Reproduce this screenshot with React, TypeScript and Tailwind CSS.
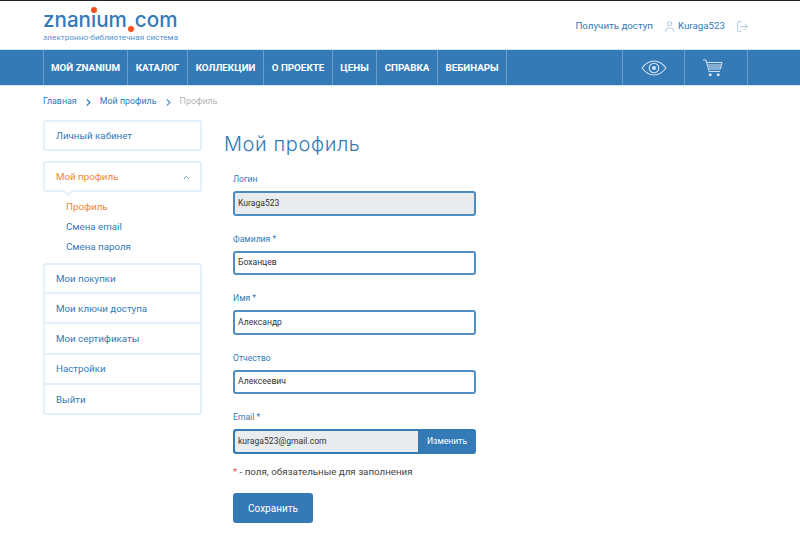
import { ChevronRight, ChevronUp, LogOut, User } from "lucide-react";

const navItems = [
  { label: "МОЙ ZNANIUM", width: "w-[84px]" },
  { label: "КАТАЛОГ", width: "w-[60px]" },
  { label: "КОЛЛЕКЦИИ", width: "w-[76px]" },
  { label: "О ПРОЕКТЕ", width: "w-[69px]" },
  { label: "ЦЕНЫ", width: "w-[44px]" },
  { label: "СПРАВКА", width: "w-[61px]" },
  { label: "ВЕБИНАРЫ", width: "w-[69px]" },
];

const bottomMenu = ["Мои покупки", "Мои ключи доступа", "Мои сертификаты", "Настройки", "Выйти"];

function Logo() {
  return (
    <div className="relative ml-[43px] w-[140px] pt-[4px]">
      <div className="relative h-[28px] font-['Inter',sans-serif] text-[20.600px] leading-[29px] font-medium whitespace-nowrap text-[#337ab7]">
        znanium<span className="ml-[8px]">com</span>
        <span className="absolute top-[2px] left-[48px] h-[6px] w-[6px] rounded-full bg-[#f4511e]" />
        <span className="absolute top-[21px] left-[85px] h-[6px] w-[6px] rounded-full bg-[#f4511e]" />
      </div>
      <div className="text-[8px] leading-[10px] tracking-[0.1px] whitespace-nowrap text-[#4f8fcb]">
        электронно-библиотечная система
      </div>
    </div>
  );
}

function EyeIcon() {
  return (
    <svg width="26" height="16" viewBox="0 0 26 16" fill="none" stroke="#d3e2f0" strokeWidth="1.1">
      <path d="M1 8C4.5 3.3 8.500 1 13 1s8.500 2.300 12 7c-3.500 4.700-7.500 7-12 7S4.500 12.700 1 8Z" />
      <circle cx="13" cy="8" r="4.800" />
      <circle cx="13" cy="8" r="2" fill="#d3e2f0" stroke="none" />
    </svg>
  );
}

function CartIcon() {
  return (
    <svg width="20" height="18" viewBox="0 0 20 18" fill="none" stroke="#d3e2f0" strokeWidth="1">
      <path d="M0 1h3l3 11.500h11" />
      <path d="M4 3.500h15l-1.500 6.500H5.700" />
      <path d="M4.800 6h13.500M5.400 8h12.500" />
      <circle cx="7.200" cy="15.800" r="1.500" fill="#d3e2f0" stroke="none" />
      <circle cx="15.200" cy="15.800" r="1.500" fill="#d3e2f0" stroke="none" />
    </svg>
  );
}

function Field({ label, value, disabled }: { label: string; value: string; disabled?: boolean }) {
  return (
    <div className="mb-[16px]">
      <div className="h-[19px] text-[8.600px] leading-[14px] text-[#337ab7]">{label}</div>
      <div
        className={`flex h-[24.500px] items-center rounded-[3px] border-2 border-[#337ab7]/85 px-[3px] text-[8.600px] text-[#333] ${
          disabled ? "bg-[#e9ecef]" : "bg-white"
        }`}
      >
        {value}
      </div>
    </div>
  );
}

export default function App() {
  return (
    <div className="h-[545px] w-[800px] overflow-hidden border-t border-t-[#222] bg-white font-['Roboto',sans-serif]">
      <header className="flex h-[48px] items-start justify-between">
        <Logo />
        <div className="mt-[17px] mr-[51px] flex items-center text-[9.750px] leading-[16px] text-[#337ab7]">
          <span>Получить доступ</span>
          <User size={13} strokeWidth={1.1} className="mr-[2px] ml-[10px] text-[#7aa7d1]" />
          <span>Kuraga523</span>
          <LogOut size={13} strokeWidth={1.1} className="ml-[11px] text-[#7aa7d1]" />
        </div>
      </header>

      <nav className="flex h-[37px] items-stretch border-y border-y-[#d5e3f0] bg-[#337ab7] pl-[43px] text-white">
        <div className="flex border-l border-l-[#6c9fcb]">
          {navItems.map((item) => (
            <div
              key={item.label}
              className={`flex items-center justify-center border-r border-r-[#6c9fcb] pt-[2px] text-[9.800px] font-bold whitespace-nowrap ${item.width}`}
            >
              {item.label}
            </div>
          ))}
        </div>
        <div className="ml-[115px] flex border-l border-l-[#6c9fcb]">
          <div className="flex w-[62px] items-center justify-center border-r border-r-[#6c9fcb]">
            <EyeIcon />
          </div>
          <div className="flex w-[63px] items-center justify-center border-r border-r-[#6c9fcb] pr-[6px]">
            <CartIcon />
          </div>
        </div>
      </nav>

      <div className="flex h-[30px] items-center pt-[2px] pl-[43px] text-[8.900px] text-[#337ab7]">
        <span>Главная</span>
        <ChevronRight size={11} strokeWidth={2.500} className="mx-[6px]" />
        <span>Мой профиль</span>
        <ChevronRight size={11} strokeWidth={2.500} className="mx-[6px] text-[#5e93c4]" />
        <span className="text-[#b5b5b5]">Профиль</span>
      </div>

      <main className="flex items-start pl-[43px]">
        <aside className="mt-[4px] w-[159px] text-[9.750px] text-[#337ab7]">
          <div className="flex h-[31px] items-center rounded-[3px] border-2 border-[#e4f0fc] pt-[1px] pl-[11px]">Личный кабинет</div>
          <div className="relative mt-[10px] flex h-[31px] items-center justify-between rounded-[3px] border-2 border-[#e4f0fc] pt-[1px] pr-[9px] pl-[11px] text-[#f58634]">
            Мой профиль
            <ChevronUp size={9} strokeWidth={2.500} className="text-[#5e93c4]" />
            <span className="absolute bottom-[-5px] left-[20px] h-[7px] w-[7px] rotate-45 border-r-2 border-b-2 border-[#e4f0fc] bg-white" />
          </div>
          <div className="pt-[5px] pl-[23px] leading-[20px]">
            <div className="text-[#f58634]">Профиль</div>
            <div>Смена email</div>
            <div>Смена пароля</div>
          </div>
          <div className="mt-[6px] rounded-[3px] border-2 border-[#e4f0fc]">
            {bottomMenu.map((item, i) => (
              <div
                key={item}
                className={`flex items-center pt-[2px] pl-[11px] ${i > 0 ? "h-[30.250px] border-t-2 border-t-[#e4f0fc]" : "h-[27px]"}`}
              >
                {item}
              </div>
            ))}
          </div>
        </aside>

        <section className="ml-[22px] w-[252px]">
          <h1 className="pt-[14px] font-['Inter',sans-serif] text-[20px] leading-[28px] font-light tracking-[0.6px] text-[#337ab7]">
            Мой профиль
          </h1>
          <div className="mt-[14px] ml-[9px] w-[243px]">
            <Field label="Логин" value="Kuraga523" disabled />
            <Field label="Фамилия *" value="Боханцев" />
            <Field label="Имя *" value="Александр" />
            <Field label="Отчество" value="Алексеевич" />
            <div className="h-[19px] text-[8.600px] leading-[14px] text-[#337ab7]">Email *</div>
            <div className="flex h-[24.500px] rounded-[3px] bg-[#337ab7] text-[8.600px]">
              <div className="my-[2px] ml-[2px] flex flex-1 items-center rounded-l-[2px] bg-[#e9ecef] pl-[3px] text-[#333]">
                kuraga523@gmail.com
              </div>
              <div className="flex w-[58px] items-center justify-center text-white">Изменить</div>
            </div>
            <div className="mt-[11px] text-[9.750px] leading-[14px] text-[#444]">
              <span className="text-[#d9534f]">*</span> - поля, обязательные для заполнения
            </div>
            <button className="mt-[14.500px] h-[30px] w-[80px] rounded-[3px] bg-[#337ab7] text-[10px] text-white">
              Сохранить
            </button>
          </div>
        </section>
      </main>
    </div>
  );
}
